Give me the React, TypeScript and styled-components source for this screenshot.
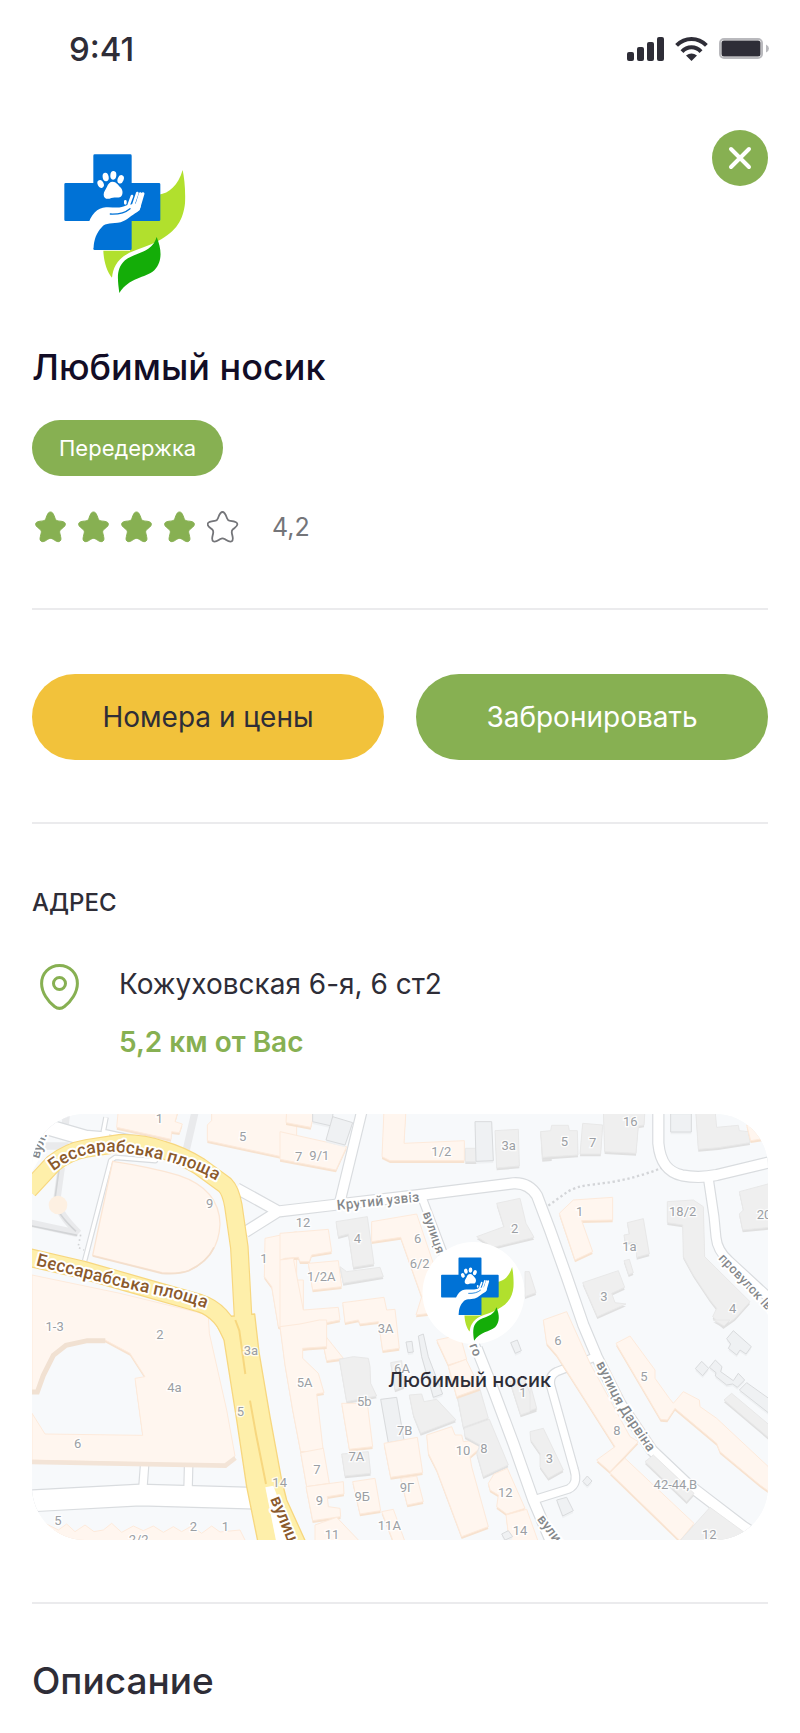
import React from "react";
import styled, { createGlobalStyle } from "styled-components";

const color = {
  green: "#87b052",
  yellow: "#f2c23b",
  ink: "#2e2d37",
  title: "#120d26",
  muted: "#747579",
  line: "#ebebed",
};

const GlobalStyle = createGlobalStyle`
  *, *::before, *::after { box-sizing: border-box; }
  body { margin: 0; background: #fff; color: ${color.ink}; font-family: Inter, "Liberation Sans", sans-serif; }
  h1, h2, p { margin: 0; }
  button { font: inherit; border: 0; cursor: pointer; }
`;

const Page = styled.div`
  display: flex;
  flex-direction: column;
  padding-bottom: 28px;
`;

const StatusBar = styled.div`
  display: flex;
  align-items: center;
  justify-content: space-between;
  padding: 29px 30px 29px 69px;
`;

const Time = styled.span`
  font-size: 33px;
  line-height: 40px;
  font-weight: 500;
`;

const StatusIcons = styled.div`
  display: flex;
  align-items: center;
  gap: 11px;
`;

const Content = styled.main`
  display: flex;
  flex-direction: column;
  padding: 32px 32px 0;
`;

const Header = styled.header`
  display: flex;
  align-items: flex-start;
  justify-content: space-between;
`;

const HeaderLogo = styled.div`
  display: flex;
  padding: 10px 0 0 18px;
`;

const CloseButton = styled.button`
  display: flex;
  align-items: center;
  justify-content: center;
  width: 56px;
  height: 56px;
  padding: 0;
  border-radius: 50%;
  background: ${color.green};
`;

const Title = styled.h1`
  margin-top: 43px;
  font-size: 36px;
  line-height: 48px;
  font-weight: 500;
  color: ${color.title};
`;

const Tag = styled.span`
  align-self: flex-start;
  margin-top: 29px;
  padding: 12px 27px;
  border-radius: 28px;
  background: ${color.green};
  color: #fff;
  font-size: 22px;
  line-height: 32px;
`;

const Rating = styled.div`
  display: flex;
  align-items: center;
  gap: 33px;
  margin-top: 35px;
`;

const Stars = styled.div`
  display: flex;
  padding-left: 3px;
  gap: 11px;
`;

const Score = styled.span`
  font-size: 25px;
  line-height: 32px;
  color: ${color.muted};
`;

const Divider = styled.hr`
  width: 100%;
  height: 2px;
  margin: 65px 0 0;
  border: 0;
  background: ${color.line};
`;

const Actions = styled.div`
  display: grid;
  grid-template-columns: 1fr 1fr;
  gap: 32px;
  margin: 64px 0 -3px;
`;

const ActionButton = styled.button<{ $tone: "yellow" | "green" }>`
  height: 86px;
  border-radius: 43px;
  background: ${(p) => color[p.$tone]};
  color: ${(p) => (p.$tone === "green" ? "#fff" : color.ink)};
  font-size: 28px;
  line-height: 40px;
`;

const SectionLabel = styled.h2`
  margin-top: 63px;
  font-size: 24px;
  line-height: 32px;
  font-weight: 500;
`;

const Address = styled.div`
  display: flex;
  gap: 40px;
  margin-top: 45px;
  padding-left: 8px;
`;

const AddressLines = styled.div`
  display: flex;
  flex-direction: column;
  gap: 18px;
  font-size: 28px;
  line-height: 40px;
`;

const Distance = styled.p`
  color: ${color.green};
  font-weight: 600;
`;

const MapCard = styled.div`
  position: relative;
  height: 426px;
  margin: 52px 0 -3px;
  border-radius: 53px;
  overflow: hidden;
  background: #f7f9fb;
`;

const MapDrawing = styled.svg`
  display: block;
  width: 100%;
  height: 100%;
`;

const Pin = styled.div`
  position: absolute;
  left: 60%;
  top: 30%;
  transform: translateX(-50%);
  display: flex;
  flex-direction: column;
  align-items: center;
  gap: 24px;
`;

const PinDisc = styled.div`
  display: flex;
  align-items: center;
  justify-content: center;
  width: 102px;
  height: 102px;
  padding: 8px 0 0 8px;
  border-radius: 50%;
  background: #fff;
`;

const PinLabel = styled.span`
  padding-right: 8px;
  font-size: 20px;
  line-height: 24px;
  font-weight: 500;
  white-space: nowrap;
`;

const SectionTitle = styled.h2`
  margin-top: 53px;
  font-size: 37px;
  line-height: 48px;
  font-weight: 500;
`;

function Logo({ width, height }: { width: number; height: number }) {
  return (
    <svg width={width} height={height} viewBox="0 0 450 480" aria-label="Любимый носик" role="img">
      <path
        fill="#b1e02d"
        d="M398 90C384 136 358 160 326 164V240H240V332H160C161 362 170 395 186 413C189 385 200 358 238 338C268 325 298 318 324 303C380 275 400 238 405 190C407 150 403 115 398 90Z"
      />
      <path
        fill="#0072d6"
        d="M134 43H241Q245 43 245 47V129H327Q331 129 331 133V239Q331 243 327 243H245V326Q245 330 241 330H134Q130 330 130 326V243H47Q43 243 43 239V133Q43 129 47 129H130V47Q130 43 134 43Z"
      />
      <path
        fill="#14ad08"
        d="M320 291C336 330 337 366 313 391C285 415 238 412 208 459C203 420 197 386 225 361C257 336 305 340 320 291Z"
      />
      <g fill="#fff">
        <path d="M188 125C199 125 204 135 211 142C221 152 219 169 209 172C199 174 193 170 184 174C171 180 161 175 161 164C161 154 167 149 171 140C174 131 180 125 188 125Z" />
        <ellipse cx="152" cy="132" rx="9" ry="12" transform="rotate(-25 152 132)" />
        <ellipse cx="167" cy="111" rx="9" ry="13" transform="rotate(-10 167 111)" />
        <ellipse cx="190" cy="106" rx="9" ry="13" transform="rotate(5 190 106)" />
        <ellipse cx="212" cy="118" rx="9" ry="13" transform="rotate(20 212 118)" />
        <path d="M112 262C122 222 142 203 168 202C192 201 210 207 230 196L262 190L272 186C275 198 270 210 262 216C244 226 232 240 212 247C188 252 166 248 156 261C138 280 133 298 130 324L112 330Z" />
      </g>
      <g stroke="#fff" strokeLinecap="round" fill="none">
        <path strokeWidth="8" d="M226 190V184M235 198L246 168M246 206L262 159" />
        <path strokeWidth="9" d="M257 206L271 161M265 208L279 161" />
      </g>
      <path d="M181 222C205 223 226 218 240 206" stroke="#0072d6" strokeWidth="4" fill="none" strokeLinecap="round" />
    </svg>
  );
}

const STAR =
  "M15.5 1C18 1 18.8 4 20 7.2C20.6 9 21.4 9.7 23.2 9.9C26.8 10.3 30.4 10.6 30.4 13.2C30.4 15.4 27.6 16.8 25.6 18.7C24.3 20 24.6 21.2 25 23C25.8 26.4 26.8 29 24.8 30.2C22.6 31.6 20 29.4 17.6 28C16.2 27.2 14.8 27.2 13.4 28C11 29.4 8.4 31.6 6.2 30.2C4.2 29 5.2 26.4 6 23C6.4 21.2 6.7 20 5.4 18.7C3.4 16.8 0.6 15.4 0.6 13.2C0.6 10.6 4.2 10.3 7.8 9.9C9.6 9.7 10.4 9 11 7.2C12.2 4 13 1 15.5 1Z";

function Star({ filled }: { filled: boolean }) {
  return (
    <svg width="32" height="32" viewBox="0 0 32 32" aria-hidden="true">
      <path
        d={STAR}
        fill={filled ? color.green : "none"}
        stroke={filled ? color.green : color.muted}
        strokeWidth={filled ? 1 : 1.8}
      />
    </svg>
  );
}

type Tone = "warm" | "grey" | "outline";
type BuildingShape = [Tone, string];

const TONES: Record<Tone, { fill: string; stroke: string; side: string }> = {
  warm: { fill: "#fff6ef", stroke: "#fdeadb", side: "#f7e2cf" },
  grey: { fill: "#efefef", stroke: "#e8e8e8", side: "#e0e0e0" },
  outline: { fill: "#eff1f3", stroke: "#d9dbdd", side: "#eff1f3" },
};

/* Blocks of the map; each has its own origin, in thirds of a pixel. */
const BLOCKS: { x: number; y: number; shapes: BuildingShape[] }[] = [
  {
    x: -36,
    y: -42,
    shapes: [
      ["warm", "295,30 475,30 465,65 487,72 478,98 455,95 453,118 290,82"],
      ["warm", "575,30 830,30 830,180 562,122 562,75 575,62"],
      ["warm", "36,525 300,580 565,645 568,700 620,930 645,1068 618,1095 36,1080 36,940 75,1002 368,1006 345,835 375,830 330,760 255,720 200,718 138,735 98,765 65,825 50,875 36,872"],
      ["warm", "735,415 830,395 830,540 850,540 850,700 775,680 755,560 733,530"],
      ["warm", "75,1270 115,1290 140,1272 165,1295 195,1275 222,1295 250,1290 275,1270 305,1297 340,1278 370,1292 400,1278 430,1297 460,1280 485,1295 515,1278 545,1300 575,1278 600,1296 660,1290 675,1320 675,1345 60,1345"],
    ],
  },
  {
    x: 744,
    y: -42,
    shapes: [
      ["warm", "0,95 200,140 168,210 0,178"],
      ["warm", "20,30 105,30 92,82 18,68"],
      ["outline", "98,30 160,30 155,78 98,65"],
      ["outline", "158,50 218,68 195,135 138,120"],
      ["warm", "312,30 378,30 372,130 553,122 553,182 330,182 306,170"],
      ["grey", "556,145 590,145 590,185 556,185"],
      ["outline", "585,65 635,65 640,182 588,184"],
      ["grey", "645,92 715,88 718,198 650,204"],
      ["grey", "782,95 815,95 815,176 787,178"],
      ["grey", "650,310 720,295 738,370 762,412 640,442 590,410 672,380"],
      ["grey", "168,365 262,350 282,492 220,502 205,402 175,410"],
      ["warm", "275,365 410,342 470,520 450,640 408,645 425,590 362,412 275,425"],
      ["warm", "0,400 145,388 155,455 95,465 88,485 60,485 55,472 15,475 0,480"],
      ["warm", "85,490 175,482 185,560 98,570"],
      ["grey", "180,500 200,515 300,502 310,530 190,550"],
      ["warm", "0,480 40,475 70,630 175,622 180,660 130,670 130,700 190,775 140,782 130,735 68,745 50,690 0,680"],
      ["warm", "188,608 312,592 320,630 345,628 358,745 308,752 295,665 240,672 235,660 195,668"],
      ["grey", "735,515 748,515 768,578 735,590"],
    ],
  },
  {
    x: 744,
    y: 618,
    shapes: [
      ["warm", "0,20 60,12 118,0 140,0 140,80 68,85 68,115 115,160 132,218 110,222 130,395 62,395 38,270 15,135"],
      ["grey", "178,118 220,110 265,115 270,140 272,190 290,228 200,245"],
      ["grey", "332,128 365,122 372,200 345,210"],
      ["outline", "378,66 396,64 400,96 384,98"],
      ["outline", "415,48 430,42 445,110 488,222 460,232 425,110"],
      ["grey", "388,225 425,222 432,245 470,238 528,300 422,340 400,285"],
      ["outline", "302,238 350,232 372,360 325,368"],
      ["warm", "185,250 262,250 278,380 208,388"],
      ["grey", "185,402 265,395 272,460 195,468"],
      ["warm", "312,370 412,352 428,458 332,472"],
      ["warm", "62,398 130,385 148,490 80,500"],
      ["warm", "78,500 190,485 192,522 142,530 145,560 180,565 182,590 98,602"],
      ["warm", "218,485 285,475 302,572 240,582"],
      ["warm", "362,475 410,468 430,545 382,555"],
      ["warm", "305,575 340,568 375,665 340,665"],
      ["warm", "105,615 170,592 235,660 235,680 105,680"],
      ["warm", "440,345 515,320 525,345 545,345 550,365 590,360 600,385 570,410 575,440 625,620 545,650 470,450 445,400"],
      ["grey", "532,230 600,208 625,295 550,322"],
      ["grey", "552,325 628,298 685,435 610,470 590,400 600,375 555,350"],
      ["warm", "470,60 540,45 560,118 505,135"],
      ["warm", "505,138 558,118 600,205 530,230"],
      ["outline", "692,68 712,60 724,92 706,100"],
      ["grey", "690,185 730,170 770,268 722,285"],
      ["grey", "750,335 790,325 850,450 805,475 780,440 780,400 752,360"],
      ["warm", "625,490 642,462 682,445 735,565 680,582 650,560 655,525 630,510"],
      ["warm", "678,585 740,568 780,680 690,680"],
      ["outline", "665,642 685,632 698,650 675,660"],
    ],
  },
  {
    x: 1494,
    y: -42,
    shapes: [
      ["grey", "32,95 62,92 65,76 115,76 118,92 142,92 144,165 38,172"],
      ["grey", "158,70 218,75 212,162 150,162"],
      ["grey", "220,30 345,30 342,75 325,78 318,160 224,155"],
      ["outline", "422,41 484,41 484,96 422,96"],
      ["grey", "497,30 555,30 560,82 625,76 628,92 655,95 660,128 565,143 505,148"],
      ["warm", "650,75 740,75 740,110 662,122"],
      ["warm", "130,300 248,292 248,360 155,362 188,455 135,480 88,340"],
      ["grey", "292,368 340,356 358,462 320,472 320,430 285,425 282,405 298,402"],
      ["grey", "282,482 298,478 310,518 296,524"],
      ["grey", "158,548 265,512 284,562 245,580 255,608 288,612 202,650"],
      ["grey", "412,305 490,300 520,320 524,470 660,605 615,655 580,680 548,650 560,625 540,600 490,525 460,470 458,375 412,368"],
      ["grey", "628,275 740,245 740,380 638,390 628,342 640,330"],
      ["warm", "40,660 110,635 180,790 300,1010 325,1025 240,1115 200,1080 255,1040 80,765 50,730"],
    ],
  },
  {
    x: 1494,
    y: 618,
    shapes: [
      ["warm", "258,70 300,48 375,150 375,175 418,235 430,250 460,215 508,240 510,260 560,295 715,440 725,520 690,495 570,395 560,370 435,265 412,300 392,298"],
      ["warm", "240,458 285,415 492,610 450,662"],
      ["grey", "345,425 370,405 492,520 470,545"],
      ["grey", "450,662 540,562 640,635 610,680 450,680"],
      ["grey", "550,0 600,0 582,18"],
      ["outline", "610,32 664,80 648,102 630,90 620,105 595,85 602,72 590,56"],
      ["outline", "515,124 536,145 518,167 496,146"],
      ["outline", "556,120 576,140 572,155 610,182 625,160 644,180 622,202 608,192 590,195 556,168 558,158 538,142"],
      ["outline", "650,188 730,245 730,290 628,210"],
      ["grey", "605,220 730,325 730,365 582,240"],
      ["outline", "80,540 110,532 130,572 98,588"],
      ["outline", "172,468 186,483 172,498 158,484"],
      ["grey", "0,240 0,190 20,265 0,272"],
    ],
  },
];

const WHITE_ROADS: [number, string][] = [
  [30, "M614 223L739 292M640 354L739 292H744L904 273L1164 243L1444 208Q1490 205 1515 245L1554 348L1604 488L1654 633L1694 728L1764 868L1859 1008L1964 1108L2134 1238L2230 1300"],
  [28, "M990 -10L924 262"],
  [22, "M1169 248L1234 420L1334 703"],
  [30, "M1334 703L1384 828L1444 988L1504 1158L1560 1290"],
  [22, "M1684 731L1574 773Q1550 785 1556 815L1626 1065Q1640 1110 1610 1125L1504 1158"],
  [30, "M1879 -10V88C1885 150 1910 175 1950 184C1990 192 2020 190 2054 183L2220 143"],
  [26, "M2029 193L2046 308L2052 370Q2056 410 2090 440L2220 560"],
  [62, "M-10 1161L324 1143L680 1153"],
  [22, "M338 1050L332 1130M470 1050L468 1130"],
  [10, "M222 10L214 52L380 88L370 140L250 130L236 140L158 440"],
  [44, "M36 36L160 72L230 78"],
];

const YELLOW_ROADS =
  "M-10 228L64 148Q110 112 164 103L264 88Q330 86 394 108Q450 124 504 158L579 213Q596 230 604 275L622 400L636 660M-10 430L154 468L364 528L504 568Q574 590 606 680";

const TRUNK =
  "M544 612L576 678L614 918L644 1118L679 1290L824 1290L764 1158L749 1098L714 908L681 714L668 600Z";

const HOUSES: [number, number, string][] = [
  [382, 26, "1"], [632, 80, "5"], [533, 282, "9"], [696, 448, "1"],
  [68, 650, "1-3"], [384, 675, "2"], [427, 833, "4a"], [137, 1002, "6"],
  [657, 724, "3a"], [625, 906, "5"], [743, 1120, "14"], [78, 1234, "5"],
  [320, 1290, "2/2"], [484, 1250, "2"], [580, 1250, "1"],
  [800, 142, "7"], [862, 137, "9/1"], [1228, 126, "1/2"], [1430, 108, "3a"],
  [813, 338, "12"], [976, 386, "4"], [1157, 388, "6"], [1163, 462, "6/2"],
  [1448, 358, "2"], [868, 500, "1/2A"], [1061, 656, "3A"], [1110, 778, "6A"],
  [818, 818, "5A"], [997, 876, "5b"], [1118, 964, "7B"], [973, 1042, "7A"],
  [855, 1080, "7"], [862, 1174, "9"], [991, 1160, "9Б"], [1125, 1134, "9Г"],
  [1072, 1248, "11A"], [900, 1276, "11"], [1293, 1024, "10"], [1356, 1016, "8"],
  [1420, 1150, "12"], [1464, 1262, "14"], [1473, 848, "1"], [1552, 1046, "3"],
  [1597, 96, "5"], [1682, 100, "7"], [1795, 36, "16"], [1643, 305, "1"],
  [1952, 305, "18/2"], [2196, 314, "20"], [1792, 412, "1a"], [1716, 560, "3"],
  [2102, 596, "4"], [1578, 694, "6"], [1836, 802, "5"], [1755, 964, "8"],
  [1930, 1126, "42-44,B"], [2032, 1276, "12"],
];

const STREETS: { id: string; d: string; text: string; size: number; tone: string }[] = [
  { id: "st1", d: "M64 172Q150 106 250 114T460 158T620 260", text: "Бессарабська площа", size: 52, tone: "#8b5a2c" },
  { id: "st2", d: "M10 454Q260 520 400 548T620 640", text: "Бессарабська площа", size: 53, tone: "#8b5a2c" },
  { id: "st3", d: "M916 288L1300 248", text: "Крутий узвіз", size: 42, tone: "#85888b" },
  { id: "st4", d: "M1172 298L1240 496", text: "вулиця", size: 39, tone: "#85888b" },
  { id: "st5", d: "M1312 694L1352 800", text: "го", size: 39, tone: "#85888b" },
  { id: "st6", d: "M1692 750L1752 872L1900 1090", text: "вулиця Дарвіна", size: 42, tone: "#85888b" },
  { id: "st7", d: "M2058 434L2290 680", text: "провулок Івана", size: 39, tone: "#85888b" },
  { id: "st8", d: "M1514 1216L1630 1370", text: "вулиця", size: 42, tone: "#85888b" },
  { id: "st9", d: "M714 1154L790 1340", text: "вулиця", size: 52, tone: "#8b5a2c" },
  { id: "st10", d: "M20 136L60 20", text: "вул.", size: 42, tone: "#85888b" },
];

function CityMap() {
  return (
    <MapDrawing viewBox="0 0 2208 1278" preserveAspectRatio="xMidYMid slice" aria-label="Карта" role="img">
      <rect width="2208" height="1278" fill="#f7f9fb" />
      <g fill="none" stroke="#e9eaec" strokeWidth="22">
        <path d="M490 -10L460 120M104 -10L100 30M88 160L74 260Q80 300 140 358M-10 326L136 358M36 96H110" />
      </g>
      <g fill="none" stroke="#d2d4d6" strokeWidth="5">
        <path d="M82 160L68 260Q74 300 132 352M-10 334L136 364" />
        <path d="M146 362L138 400L156 408" strokeDasharray="5 9" />
      </g>
      <circle cx="78" cy="273" r="28" fill="#fdf0e2" />
      <g fill="none" strokeLinejoin="round">
        {WHITE_ROADS.map(([w, d]) => (
          <path key={d} d={d} stroke="#d9dcdf" strokeWidth={w + 7} />
        ))}
        {WHITE_ROADS.map(([w, d]) => (
          <path key={d} d={d} stroke="#fff" strokeWidth={w} />
        ))}
        <path
          d="M1549 275L1600 238Q1630 216 1680 212L1740 204Q1820 190 1888 162"
          stroke="#d3d5d8"
          strokeWidth="7"
          strokeDasharray="7 8"
        />
      </g>
      <path d="M-10 -10H84L40 60L36 110L-10 190Z" fill="#fff" />
      <path
        d="M242 142Q360 160 440 184Q562 225 564 330Q560 430 470 470Q440 480 390 476L182 424Z"
        fill="#fff6ef"
        stroke="#fbe6d5"
        strokeWidth="4"
      />
      <path d="M182 426L390 478Q440 482 470 470Q525 445 546 400" fill="none" stroke="#f3dfcd" strokeWidth="5" />
      {BLOCKS.map((block, i) => (
        <g key={i} transform={`translate(${block.x} ${block.y})`} strokeWidth="3">
          {block.shapes.map(([tone, points]) => (
            <g key={points}>
              <polygon points={points} transform="translate(0 7)" fill={TONES[tone].side} />
              <polygon points={points} fill={TONES[tone].fill} stroke={TONES[tone].stroke} />
            </g>
          ))}
        </g>
      ))}
      <path
        d="M0 834H16L34 784L64 724L102 694L166 680L220 680"
        fill="none"
        stroke="#f1e1d2"
        strokeWidth="15"
      />
      <path d="M0 1044L580 1055L610 1032" fill="none" stroke="#f3e4d7" strokeWidth="14" />
      <g strokeLinejoin="round">
        <path d={YELLOW_ROADS} fill="none" stroke="#f7d77f" strokeWidth="56" />
        <path d={TRUNK} fill="#feefaa" stroke="#f7d77f" strokeWidth="4" />
        <path d={YELLOW_ROADS} fill="none" stroke="#feefaa" strokeWidth="49" />
        <path d="M610 618L622 650L640 780M654 860L672 960L702 1110" fill="none" stroke="#f7d77f" strokeWidth="6" />
        <path d="M700 1120L724 1115L790 1290H734Z" fill="#fff" />
      </g>
      <g
        fontFamily="Roboto, sans-serif"
        fontSize="39"
        fill="#9b9fa4"
        stroke="#fff"
        strokeOpacity="0.8"
        strokeWidth="8"
        paintOrder="stroke"
        textAnchor="middle"
      >
        {HOUSES.map(([x, y, label]) => (
          <text key={`${x}-${y}`} x={x} y={y}>
            {label}
          </text>
        ))}
      </g>
      <g fontFamily="Roboto, sans-serif" fontWeight="500" stroke="#fff" strokeWidth="12" strokeLinejoin="round" paintOrder="stroke">
        {STREETS.map((s) => (
          <React.Fragment key={s.id}>
            <path id={s.id} d={s.d} fill="none" stroke="none" />
            <text fontSize={s.size} fill={s.tone}>
              <textPath href={`#${s.id}`}>{s.text}</textPath>
            </text>
          </React.Fragment>
        ))}
      </g>
    </MapDrawing>
  );
}

function SignalIcon() {
  return (
    <svg width="37" height="24" viewBox="0 0 37 24" fill={color.ink} aria-hidden="true">
      <rect x="0" y="15" width="7" height="9" rx="2" />
      <rect x="10" y="10" width="7" height="14" rx="2" />
      <rect x="20" y="5" width="7" height="19" rx="2" />
      <rect x="30" y="0" width="7" height="24" rx="2" />
    </svg>
  );
}

function WifiIcon() {
  return (
    <svg width="33" height="24" viewBox="0 0 33 24" fill="none" aria-hidden="true">
      <path d="M1.6 8.4Q8 2 16.5 2T31.4 8.4" stroke={color.ink} strokeWidth="4" />
      <path d="M7 14.6Q11 10.2 16.5 10.2T26 14.6" stroke={color.ink} strokeWidth="4" />
      <path d="M11 18.4Q16.5 14.4 22 18.4L16.5 24Z" fill={color.ink} />
    </svg>
  );
}

function BatteryIcon() {
  return (
    <svg width="51" height="22" viewBox="0 0 51 22" aria-hidden="true">
      <rect x="1" y="1" width="42" height="19" rx="4" fill="#fff" stroke="#b9b9bd" strokeWidth="2" />
      <rect x="2.5" y="2.5" width="39" height="16" rx="2.5" fill={color.ink} />
      <path d="M47 6.5Q50 8 50 10.5T47 14.5Z" fill="#b9b9bd" />
    </svg>
  );
}

export default function App() {
  return (
    <>
      <GlobalStyle />
      <Page>
        <StatusBar>
          <Time>9:41</Time>
          <StatusIcons>
            <SignalIcon />
            <WifiIcon />
            <BatteryIcon />
          </StatusIcons>
        </StatusBar>
        <Content>
          <Header>
            <HeaderLogo>
              <Logo width={150} height={160} />
            </HeaderLogo>
            <CloseButton type="button" aria-label="Закрыть">
              <svg width="24" height="24" viewBox="0 0 24 24" stroke="#fff" strokeWidth="4" strokeLinecap="round">
                <path d="M3 3L21 21M21 3L3 21" />
              </svg>
            </CloseButton>
          </Header>
          <Title>Любимый носик</Title>
          <Tag>Передержка</Tag>
          <Rating>
            <Stars>
              {[1, 2, 3, 4, 5].map((n) => (
                <Star key={n} filled={n <= 4} />
              ))}
            </Stars>
            <Score>4,2</Score>
          </Rating>
          <Divider />
          <Actions>
            <ActionButton type="button" $tone="yellow">
              Номера и цены
            </ActionButton>
            <ActionButton type="button" $tone="green">
              Забронировать
            </ActionButton>
          </Actions>
          <Divider />
          <SectionLabel>АДРЕС</SectionLabel>
          <Address>
            <svg width="39" height="46" viewBox="0 0 39 46" fill="none" stroke={color.green} strokeWidth="3" aria-hidden="true">
              <path d="M19.5 1.6C9 1.6 1.6 9.5 1.6 19.5C1.6 28.5 8 37.5 14.5 42.5Q19.5 46.3 24.5 42.5C31 37.5 37.4 28.5 37.4 19.5C37.4 9.5 30 1.6 19.5 1.6Z" />
              <circle cx="19.5" cy="19.5" r="6" />
            </svg>
            <AddressLines>
              <p>Кожуховская 6-я, 6 ст2</p>
              <Distance>5,2 км от Вас</Distance>
            </AddressLines>
          </Address>
          <MapCard>
            <CityMap />
            <Pin>
              <PinDisc>
                <Logo width={90} height={96} />
              </PinDisc>
              <PinLabel>Любимый носик</PinLabel>
            </Pin>
          </MapCard>
          <Divider />
          <SectionTitle>Описание</SectionTitle>
        </Content>
      </Page>
    </>
  );
}
